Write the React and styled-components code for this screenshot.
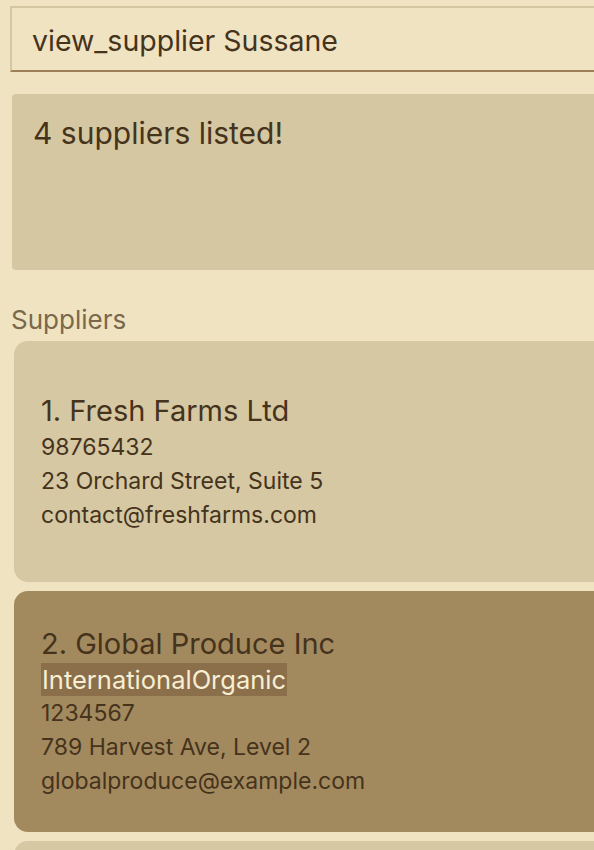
import React from 'react'
import styled, { createGlobalStyle } from 'styled-components'

const GlobalStyle = createGlobalStyle`
    body {
        margin: 0;
        background: #F0E3C2;
        font-family: Inter, "Noto Sans", sans-serif;
        overflow: hidden;
    }
`;

const suppliers = [
    { id: 1, name: 'Fresh Farms Ltd', tags: [], phone: '98765432', address: '23 Orchard Street, Suite 5', email: 'contact@freshfarms.com' },
    { id: 2, name: 'Global Produce Inc', tags: ['InternationalOrganic'], phone: '1234567', address: '789 Harvest Ave, Level 2', email: 'globalproduce@example.com', selected: true },
    { id: 3, name: 'Green Valley Co', tags: [], phone: '87654321', address: '12 Valley Road', email: 'hello@greenvalley.com' },
];

function App() {
    return (
        <AppStyled>
            <GlobalStyle />
            <CommandBox>view_supplier Sussane</CommandBox>
            <ResultBox>4 suppliers listed!</ResultBox>
            <ListLabel>Suppliers</ListLabel>
            <List>
                {suppliers.map((s) => (
                    <Card key={s.id} $selected={s.selected}>
                        <Name>{s.id}. {s.name}</Name>
                        {s.tags.length > 0 && (
                            <Tags>
                                {s.tags.map((t) => <Tag key={t}>{t}</Tag>)}
                            </Tags>
                        )}
                        <Detail>{s.phone}</Detail>
                        <Detail>{s.address}</Detail>
                        <Detail>{s.email}</Detail>
                    </Card>
                ))}
            </List>
        </AppStyled>
    )
}

const AppStyled = styled.div`
    width: 620px;
    height: 100vh;
    overflow: hidden;
    display: flex;
    flex-direction: column;
    padding: 6px 0 0 10px;
    box-sizing: border-box;
    color: #45331C;
    & > * {
        flex-shrink: 0;
    }
`;

const CommandBox = styled.div`
    height: 66px;
    box-sizing: border-box;
    border-top: 2px solid #D3C6A0;
    border-left: 2px solid #D3C6A0;
    border-bottom: 2px solid #9C7F56;
    padding: 2px 20px 0;
    display: flex;
    align-items: center;
    font-size: 28.5px;
    color: #45331C;
`;

const ResultBox = styled.div`
    margin: 22px 0 0 2px;
    height: 176px;
    background: #D5C7A2;
    border-radius: 4px;
    padding: 21px 21px;
    box-sizing: border-box;
    font-size: 30px;
    line-height: 1.2;
`;

const ListLabel = styled.div`
    margin: 34px 0 0 1px;
    font-size: 26px;
    color: #7A684B;
    line-height: 1.2;
`;

const List = styled.div`
    display: flex;
    flex-direction: column;
    gap: 9px;
    margin: 6px 0 0 4px;
`;

const Card = styled.div`
    background: ${(p) => (p.$selected ? '#A3895E' : '#D5C8A3')};
    border-radius: 14px;
    min-height: 241px;
    box-sizing: border-box;
    padding: 10px 27px;
    display: flex;
    flex-direction: column;
    justify-content: center;
`;

const Name = styled.div`
    font-size: 29px;
    line-height: 38px;
    color: #45331C;
`;

const Tags = styled.div`
    display: flex;
    gap: 6px;
`;

const Tag = styled.span`
    background: #8B6E4A;
    color: #F7EED3;
    font-size: 25.5px;
    line-height: 33px;
    padding: 0 1px;
`;

const Detail = styled.div`
    font-size: 23px;
    line-height: 34px;
    color: #45331C;
`;

export default App
